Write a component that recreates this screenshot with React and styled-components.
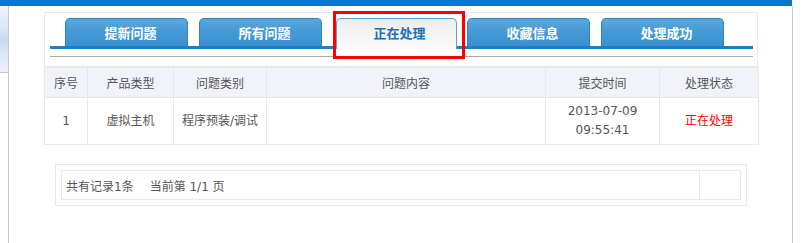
import React from "react"
import styled, { createGlobalStyle } from "styled-components"

const GlobalStyle = createGlobalStyle`
  body {
    margin: 0;
    background: #fff;
    font-family: "DejaVu Sans", "Noto Sans CJK SC", sans-serif;
    font-size: 12px;
    color: #555;
  }
`

const Frame = styled.div`
  width: 793px;
  height: 243px;
  display: flex;
  flex-direction: column;
`

const TopBar = styled.div`
  height: 6px;
  width: 792px;
  background: #0a77cc;
`

const Body = styled.div`
  flex: 1;
  display: flex;
  border-right: 1px solid #c8c8c8;
`

const Side = styled.div`
  width: 8px;
  border-right: 1px solid #c8c8c8;
`

const SideTop = styled.div`
  height: 66px;
  border-bottom: 1px solid #b9c6d4;
  background: linear-gradient(#eef4fc 0%, #dde9f8 30%, #c6dbf4 50%, #dfeaf9 80%, #eaf1fb 100%);
`

const Main = styled.div`
  flex: 1;
  padding: 6px 0 0 35px;
`

const Content = styled.div`
  width: 714px;
`

const TabPanel = styled.div`
  border: 1px solid #e8e8e8;
  padding: 5px 4px 9px 5px;
`

const TabBar = styled.div`
  position: relative;
  display: flex;
  align-items: flex-end;
  gap: 11px;
  height: 28px;
  padding-left: 15px;
  border-bottom: 3px solid #1e7fc6;
`

const Tab = styled.div`
  box-sizing: border-box;
  width: ${p => (p.$active ? 121 : 123)}px;
  height: ${p => (p.$active ? 31 : 28)}px;
  margin-left: ${p => (p.$active ? 3 : 0)}px;
  margin-right: ${p => (p.$active ? -1 : 0)}px;
  margin-bottom: ${p => (p.$active ? -3 : 0)}px;
  padding: ${p => (p.$active ? "0 0 3px 6px" : "0 0 0 8px")};
  display: flex;
  align-items: center;
  justify-content: center;
  border: 1px solid ${p => (p.$active ? "#5a9fd6" : "#2f84c4")};
  border-bottom: none;
  border-radius: 5px 5px 0 0;
  background: ${p =>
    p.$active
      ? "linear-gradient(#ececec, #f6f6f6 60%, #fbfbfb)"
      : "linear-gradient(#5aa8dd, #4499d5 50%, #3a8fd0)"};
  color: ${p => (p.$active ? "#1c6fb3" : "#fff")};
  font-family: "Noto Sans CJK SC", sans-serif;
  font-size: 13px;
  font-weight: bold;
  z-index: ${p => (p.$active ? 1 : 0)};
`

const Highlight = styled.div`
  position: absolute;
  left: 283px;
  top: -7px;
  width: 132px;
  height: 48px;
  box-sizing: border-box;
  border: 3px solid #f00;
  z-index: 2;
  pointer-events: none;
`

const Rule = styled.div`
  margin-top: 7px;
  height: 1px;
  background: #aaa;
`

const Table = styled.table`
  width: 714px;
  border-collapse: collapse;
  table-layout: fixed;
  font-family: "DejaVu Sans", "Noto Sans CJK SC", sans-serif;
  font-size: 12px;
  color: #555;
  th,
  td {
    border: 1px solid #e8e8e8;
    text-align: center;
    padding: 0;
    font-weight: normal;
  }
  th {
    height: 29px;
    background: #f0f3f8;
  }
  td {
    height: 46px;
    line-height: 19px;
  }
`

const Status = styled.span`
  color: #f00;
`

const Footer = styled.div`
  margin: 19px 11px 0;
  border: 1px solid #e8e8e8;
  padding: 5px;
`

const FooterRow = styled.div`
  display: flex;
  height: 30px;
  box-sizing: border-box;
  border: 1px solid #e8e8e8;
`

const FooterInfo = styled.div`
  flex: 1;
  display: flex;
  align-items: center;
  padding-left: 4px;
  border-right: 1px solid #e8e8e8;
`

const FooterGap = styled.span`
  margin-left: 16px;
`

const FooterCell = styled.div`
  width: 40px;
`

const tabs = ["提新问题", "所有问题", "正在处理", "收藏信息", "处理成功"]

export default function App() {
  return (
    <Frame>
      <GlobalStyle />
      <TopBar />
      <Body>
        <Side>
          <SideTop />
        </Side>
        <Main>
          <Content>
            <TabPanel>
              <TabBar>
                {tabs.map(t => (
                  <Tab key={t} $active={t === "正在处理"}>
                    {t}
                  </Tab>
                ))}
                <Highlight />
              </TabBar>
              <Rule />
            </TabPanel>
            <Table>
              <colgroup>
                <col style={{ width: 43 }} />
                <col style={{ width: 86 }} />
                <col style={{ width: 93 }} />
                <col style={{ width: 279 }} />
                <col style={{ width: 114 }} />
                <col style={{ width: 99 }} />
              </colgroup>
              <thead>
                <tr>
                  <th>序号</th>
                  <th>产品类型</th>
                  <th>问题类别</th>
                  <th>问题内容</th>
                  <th>提交时间</th>
                  <th>处理状态</th>
                </tr>
              </thead>
              <tbody>
                <tr>
                  <td>1</td>
                  <td>虚拟主机</td>
                  <td>程序预装/调试</td>
                  <td></td>
                  <td>
                    2013-07-09
                    <br />
                    09:55:41
                  </td>
                  <td>
                    <Status>正在处理</Status>
                  </td>
                </tr>
              </tbody>
            </Table>
            <Footer>
              <FooterRow>
                <FooterInfo>
                  共有记录1条<FooterGap>当前第 1/1 页</FooterGap>
                </FooterInfo>
                <FooterCell />
              </FooterRow>
            </Footer>
          </Content>
        </Main>
      </Body>
    </Frame>
  )
}
